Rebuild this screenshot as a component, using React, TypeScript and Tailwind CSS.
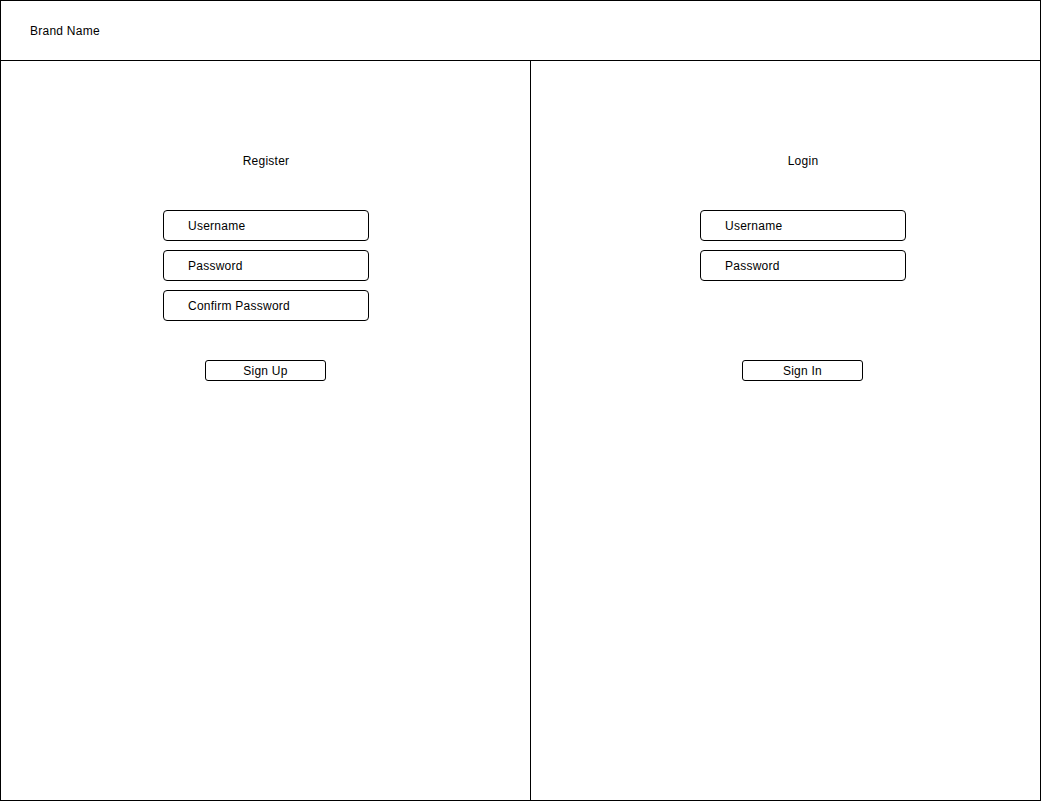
export default function App() {
  const font = { fontFamily: '"Liberation Sans", Arial, sans-serif' };

  const Field = ({ label }: { label: string }) => (
    <div className="h-[31px] w-[206px] border border-black rounded-[4px] flex items-center pl-[24px] text-[12px] tracking-[0.25px] text-black">
      {label}
    </div>
  );

  const Button = ({ label }: { label: string }) => (
    <div className="h-[21px] w-[121px] border border-black rounded-[3px] flex items-center justify-center text-[12px] tracking-[0.25px] text-black">
      {label}
    </div>
  );

  return (
    <div className="w-[1041px] h-[801px] border border-black bg-white flex flex-col" style={font}>
      {/* Header */}
      <div className="h-[60px] shrink-0 border-b border-black flex items-center pl-[29px] text-[12px] tracking-[0.25px] text-black">
        Brand Name
      </div>

      <div className="flex flex-1">
        {/* Register */}
        <div className="w-[530px] border-r border-black">
          <div className="ml-[162px] w-[206px] flex flex-col items-center">
            <div className="mt-[93px] h-[14px] leading-[14px] text-[12px] tracking-[0.25px] text-black">Register</div>
            <div className="mt-[42px] flex flex-col gap-[9px]">
              <Field label="Username" />
              <Field label="Password" />
              <Field label="Confirm Password" />
            </div>
            <div className="mt-[39px] self-start ml-[42px]">
              <Button label="Sign Up" />
            </div>
          </div>
        </div>

        {/* Login */}
        <div className="flex-1">
          <div className="ml-[169px] w-[206px] flex flex-col items-center">
            <div className="mt-[93px] h-[14px] leading-[14px] text-[12px] tracking-[0.25px] text-black">Login</div>
            <div className="mt-[42px] flex flex-col gap-[9px]">
              <Field label="Username" />
              <Field label="Password" />
            </div>
            <div className="mt-[79px] self-start ml-[42px]">
              <Button label="Sign In" />
            </div>
          </div>
        </div>
      </div>
    </div>
  );
}
